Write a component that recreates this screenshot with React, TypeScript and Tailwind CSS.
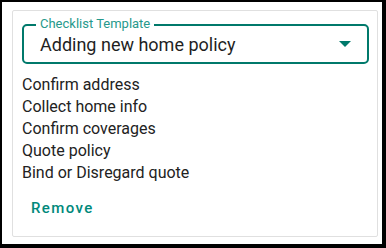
import React from "react";

export default function App() {
  const items = [
    "Confirm address",
    "Collect home info",
    "Confirm coverages",
    "Quote policy",
    "Bind or Disregard quote",
  ];
  return (
    <div
      className="w-[386px] h-[248px] bg-white border-l-2 border-t-2 border-r-4 border-b-4 border-black pl-[10px] pt-[8px] pr-[4px] pb-[7px]"
      style={{ fontFamily: "Roboto, 'Liberation Sans', sans-serif" }}
    >
      <div className="h-full w-full border border-[#e0e0e0] rounded-[2px] pl-[9px] pr-[8px] pt-[13px]">
        <div className="relative h-[40px] border-2 border-[#00796b] rounded-[5px] flex items-center pl-[16px] pr-[14px]">
          <span className="absolute left-[12px] top-[-10px] bg-white px-[4px] text-[13px] leading-[16px] text-[#26998c]">
            Checklist Template
          </span>
          <span className="flex-1 text-[18px] leading-[22px] text-[#1f1f1f] pt-[1px]">
            Adding new home policy
          </span>
          <svg width="12" height="6" viewBox="0 0 12 6" className="mr-[2px]">
            <path d="M0 0 L12 0 L6 6 Z" fill="#00796b" />
          </svg>
        </div>
        <div className="mt-[10px] flex flex-col">
          {items.map((t) => (
            <div key={t} className="text-[16px] leading-[22px] text-[#222222]">
              {t}
            </div>
          ))}
        </div>
        <button className="mt-[12px] ml-[1px] px-[8px] py-[2px] text-[15px] leading-[20px] font-medium tracking-[1.4px] text-[#00897b]">
          Remove
        </button>
      </div>
    </div>
  );
}
